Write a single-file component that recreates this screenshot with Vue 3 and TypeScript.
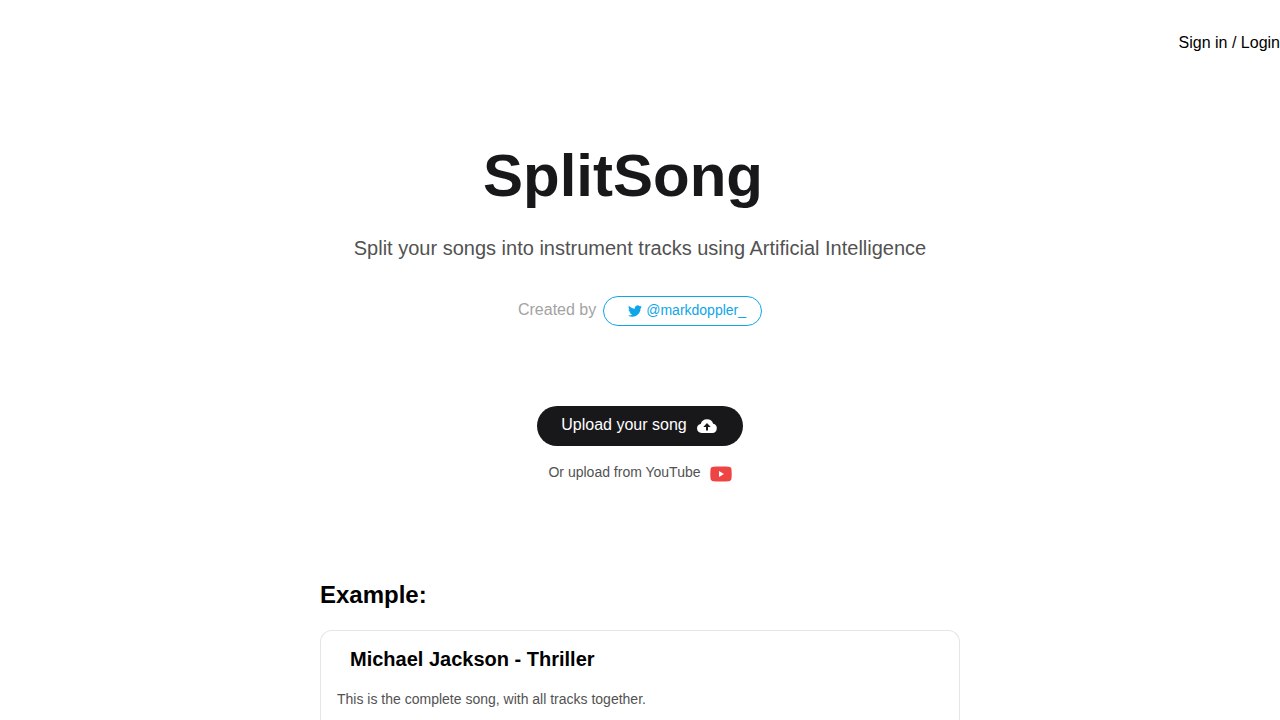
<script setup lang="ts">
import { ref } from 'vue'

interface Example {
  title: string
  description: string
}

const example: Example = {
  title: 'Michael Jackson - Thriller',
  description: 'This is the complete song, with all tracks together.',
}

const fileInput = ref<HTMLInputElement | null>(null)

function chooseFile(): void {
  fileInput.value?.click()
}
</script>

<template>
  <div class="page">
    <header class="topbar">
      <a class="login" href="#login">Sign in / Login</a>
    </header>

    <main class="content">
      <section class="hero">
        <h1 class="brand">SplitSong</h1>
        <p class="tagline">Split your songs into instrument tracks using Artificial Intelligence</p>
        <div class="credit">
          <span class="by">Created by</span>
          <a class="handle" href="#markdoppler">
            <svg class="bird" viewBox="0 0 24 20" aria-hidden="true">
              <path d="M23.95 2.57a10 10 0 0 1-2.82.77 4.96 4.96 0 0 0 2.16-2.72c-.95.55-2 .95-3.13 1.18a4.92 4.92 0 0 0-8.38 4.48C7.69 6.09 4.07 4.13 1.64 1.16a4.82 4.82 0 0 0-.67 2.48c0 1.71.87 3.21 2.19 4.1a4.9 4.9 0 0 1-2.23-.62v.06a4.92 4.92 0 0 0 3.95 4.83 5 5 0 0 1-2.21.08 4.94 4.94 0 0 0 4.6 3.42A9.87 9.87 0 0 1 0 17.54a14 14 0 0 0 7.55 2.21c9.05 0 14-7.5 14-13.99 0-.21 0-.42-.02-.63a9.94 9.94 0 0 0 2.42-2.56z" />
            </svg>
            <span>@markdoppler_</span>
          </a>
        </div>
      </section>

      <section class="actions">
        <button class="upload" type="button" @click="chooseFile">
          <span>Upload your song</span>
          <svg class="cloud" viewBox="0 0 20 14" aria-hidden="true">
            <path fill-rule="evenodd" d="M4.6 14A4.6 4.6 0 0 1 3.700 4.900 6.600 6.600 0 0 1 16.200 4.800 4.670 4.670 0 0 1 15.400 14zM10 4 6.300 8H9v3.500h2V8h2.700z" />
          </svg>
        </button>
        <input ref="fileInput" type="file" accept="audio/*" aria-label="Song file" hidden />
        <button class="youtube" type="button">
          <span>Or upload from YouTube</span>
          <svg class="tube" viewBox="0 0 22 16" aria-hidden="true">
            <path class="screen" d="M3.2.8C8.2.3 13.8.3 18.8.8c1.7.1 2.5 1 2.7 2.6.3 3 .3 6.2 0 9.2-.2 1.6-1 2.500-2.700 2.600-5 .5-10.600.5-15.600 0-1.700-.1-2.500-1-2.700-2.600-.3-3-.3-6.200 0-9.200C.7 1.800 1.500.9 3.200.8z" />
            <path class="play" d="M9 5v6l5-3z" />
          </svg>
        </button>
      </section>

      <section class="examples">
        <h2>Example:</h2>
        <article class="card">
          <h3>{{ example.title }}</h3>
          <p>{{ example.description }}</p>
        </article>
      </section>
    </main>
  </div>
</template>

<style>
body {
  margin: 0;
  background: #fff;
}
</style>

<style scoped>
.page {
  display: flex;
  flex-direction: column;
  min-height: 100vh;
  font-family: "Liberation Sans", Arial, sans-serif;
  font-size: 16px;
  line-height: 24px;
  color: #000;
}

h1,
h2,
h3,
p {
  margin: 0;
}

a {
  text-decoration: none;
}

button {
  border: 0;
  font: inherit;
  cursor: pointer;
}

svg {
  display: block;
  flex: none;
}

.topbar {
  display: flex;
  justify-content: flex-end;
  padding: 31px 0;
}

.login {
  color: #000;
}

.content {
  display: flex;
  flex: 1;
  flex-direction: column;
  box-sizing: border-box;
  width: 100%;
  max-width: 640px;
  margin: 0 auto;
  padding-top: 60px;
}

.hero {
  display: flex;
  flex-direction: column;
  align-items: center;
  text-align: center;
}

.brand {
  padding-right: 34px;
  font-size: 60px;
  line-height: 60px;
  color: #18181b;
}

.tagline {
  margin-top: 28px;
  font-size: 20px;
  line-height: 28px;
  color: #525252;
}

.credit {
  display: flex;
  align-items: center;
  gap: 7px;
  margin-top: 34px;
  color: #a3a3a3;
}

.by {
  padding-bottom: 2px;
}

.handle {
  display: flex;
  align-items: center;
  gap: 4px;
  padding: 3px 15px 5px 24px;
  border: 1px solid #0ea5e9;
  border-radius: 16px;
  font-size: 14px;
  line-height: 20px;
  color: #0ea5e9;
}

.bird {
  width: 14px;
  height: 12px;
  padding-top: 2px;
  fill: currentColor;
}

.actions {
  display: flex;
  flex-direction: column;
  align-items: center;
  gap: 16px;
  margin-top: 80px;
}

.upload {
  display: flex;
  align-items: center;
  gap: 10px;
  padding: 8px 26px 8px 24px;
  border-radius: 20px;
  background: #18181b;
  line-height: 22px;
  color: #fff;
}

.upload span {
  padding-bottom: 2px;
}

.cloud {
  width: 20px;
  height: 14px;
  fill: currentColor;
}

.youtube {
  display: flex;
  align-items: center;
  gap: 9px;
  padding: 0;
  background: transparent;
  font-size: 14px;
  line-height: 20px;
  color: #525252;
}

.youtube span {
  padding-bottom: 4px;
}

.tube {
  width: 22px;
  height: 16px;
}

.screen {
  fill: #ef4444;
}

.play {
  fill: #fff;
}

.examples {
  display: flex;
  flex: 1;
  flex-direction: column;
  gap: 18px;
  margin-top: 92px;
}

.examples h2 {
  font-size: 24px;
  line-height: 34px;
}

.card {
  flex: 1;
  padding: 14px 16px 0;
  border: 1px solid #e5e5e5;
  border-bottom: 0;
  border-radius: 12px 12px 0 0;
}

.card h3 {
  padding-left: 13px;
  font-size: 20px;
  line-height: 28px;
}

.card p {
  margin-top: 16px;
  font-size: 14px;
  line-height: 20px;
  color: #525252;
}
</style>
